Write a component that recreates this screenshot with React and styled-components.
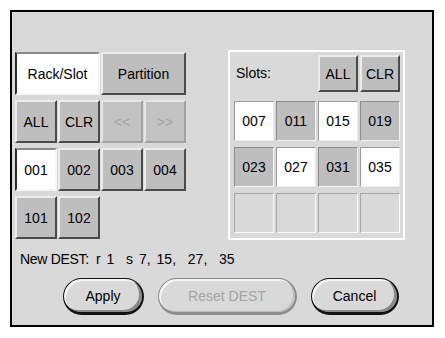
import React from "react";
import styled, { createGlobalStyle } from "styled-components";

const GlobalStyle = createGlobalStyle`
  html, body {
    margin: 0;
    padding: 0;
    background: #ffffff;
  }
  body {
    font-family: "Liberation Sans", Arial, sans-serif;
  }
`;

const Page = styled.div`
  padding: 10px;
`;

const Frame = styled.div`
  box-sizing: border-box;
  width: 424px;
  height: 317px;
  border: 2px solid #000;
  background: #d9d9d9;
  padding: 38px 0 0 3px;
  display: flex;
  flex-direction: column;
  font-size: 14px;
  color: #000;
`;

const MainRow = styled.div`
  display: flex;
  align-items: flex-start;
  gap: 42px;
`;

const LeftGrid = styled.div`
  margin-top: 2px;
  display: grid;
  grid-template-columns: repeat(4, 42px);
  grid-auto-rows: 43px;
  column-gap: 1px;
  row-gap: 5px;
`;

const Bevel = styled.button`
  box-sizing: border-box;
  margin: 0;
  padding: 0;
  font: inherit;
  font-size: 14px;
  grid-column: span ${(p) => p.$span || 1};
  border: 2px solid;
  background: ${(p) => (p.$on ? "#ffffff" : p.$disabled ? "#c2c2c2" : "#bebebe")};
  color: ${(p) => (p.$disabled ? "#a4a4a4" : "#000")};
  border-color: ${(p) =>
    p.$on
      ? "#8a8a8a #f4f4f4 #f4f4f4 #2a2a2a"
      : p.$disabled
      ? "#e6e6e6 #a2a2a2 #a2a2a2 #e6e6e6"
      : "#ececec #4a4a4a #4a4a4a #ececec"};
`;

const Panel = styled.div`
  box-sizing: border-box;
  width: 177px;
  height: 190px;
  border: 2px solid #ffffff;
  padding: 3px 3px 0 4px;
`;

const SlotGrid = styled.div`
  display: grid;
  grid-template-columns: repeat(4, 40px);
  grid-template-rows: 37px 40px 40px 40px;
  column-gap: 2px;
  row-gap: 6px;
`;

const SlotsLabel = styled.div`
  grid-column: span 2;
  display: flex;
  align-items: center;
  padding-left: 2px;
  padding-bottom: 2px;
`;

const HeaderButton = styled(Bevel)`
  margin-bottom: -3px;
  height: 37px;
`;

const Slot = styled.div`
  box-sizing: border-box;
  display: flex;
  align-items: center;
  justify-content: center;
  margin-top: 3px;
  height: 40px;
  border: 1px solid;
  background: ${(p) => (p.$kind === "on" ? "#ffffff" : p.$kind === "off" ? "#bebebe" : "#d9d9d9")};
  border-color: ${(p) =>
    p.$kind === "on"
      ? "#9a9a9a #ececec #ececec #9a9a9a"
      : p.$kind === "off"
      ? "#8c8c8c #f2f2f2 #f2f2f2 #8c8c8c"
      : "#a6a6a6 #fafafa #fafafa #a6a6a6"};
`;

const DestRow = styled.div`
  display: flex;
  margin: 11px 0 0 5px;
  line-height: 16px;
  white-space: pre;
`;

const DestLabel = styled.span`
  flex: 0 0 76px;
  letter-spacing: -0.3px;
`;

const DestValue = styled.span`
  word-spacing: 2px;
`;

const ActionRow = styled.div`
  display: flex;
  gap: 14px;
  margin: 11px 0 0 48px;
`;

const Pill = styled.button`
  box-sizing: border-box;
  height: 37px;
  width: ${(p) => p.$w}px;
  margin: 0;
  padding: 0;
  font: inherit;
  font-size: 14px;
  border-radius: 19px;
  background: #d9d9d9;
  color: ${(p) => (p.$disabled ? "#a4a4a4" : "#000")};
  border: 1px solid ${(p) => (p.$disabled ? "#8c8c8c" : "#111")};
  border-right-width: 2px;
  border-bottom-width: 3px;
  box-shadow: ${(p) =>
    p.$disabled
      ? "inset 2px 2px 0 #f4f4f4, inset -2px -1px 0 #bdbdbd"
      : "inset 2px 2px 0 #f4f4f4, inset -3px -2px 0 #8a8a8a"};
`;

const navButtons = ["ALL", "CLR", "<<", ">>"];

const slots = [
  ["007", "on"],
  ["011", "off"],
  ["015", "on"],
  ["019", "off"],
  ["023", "off"],
  ["027", "on"],
  ["031", "off"],
  ["035", "on"],
  ["", "empty"],
  ["", "empty"],
  ["", "empty"],
  ["", "empty"],
];

export default function App() {
  return (
    <Page>
      <GlobalStyle />
      <Frame>
        <MainRow>
          <LeftGrid>
            <Bevel $span={2} $on>Rack/Slot</Bevel>
            <Bevel $span={2}>Partition</Bevel>
            {navButtons.map((t, i) => (
              <Bevel key={t} $disabled={i > 1}>
                {t}
              </Bevel>
            ))}
            <Bevel $on>001</Bevel>
            <Bevel>002</Bevel>
            <Bevel>003</Bevel>
            <Bevel>004</Bevel>
            <Bevel>101</Bevel>
            <Bevel>102</Bevel>
          </LeftGrid>
          <Panel>
            <SlotGrid>
              <SlotsLabel>Slots:</SlotsLabel>
              <HeaderButton>ALL</HeaderButton>
              <HeaderButton>CLR</HeaderButton>
              {slots.map(([t, k], i) => (
                <Slot key={i} $kind={k}>
                  {t}
                </Slot>
              ))}
            </SlotGrid>
          </Panel>
        </MainRow>
        <DestRow>
          <DestLabel>New DEST:</DestLabel>
          <DestValue>r 1  s 7, 15,  27,  35</DestValue>
        </DestRow>
        <ActionRow>
          <Pill $w={81}>Apply</Pill>
          <Pill $w={139} $disabled>
            Reset DEST
          </Pill>
          <Pill $w={88}>Cancel</Pill>
        </ActionRow>
      </Frame>
    </Page>
  );
}
